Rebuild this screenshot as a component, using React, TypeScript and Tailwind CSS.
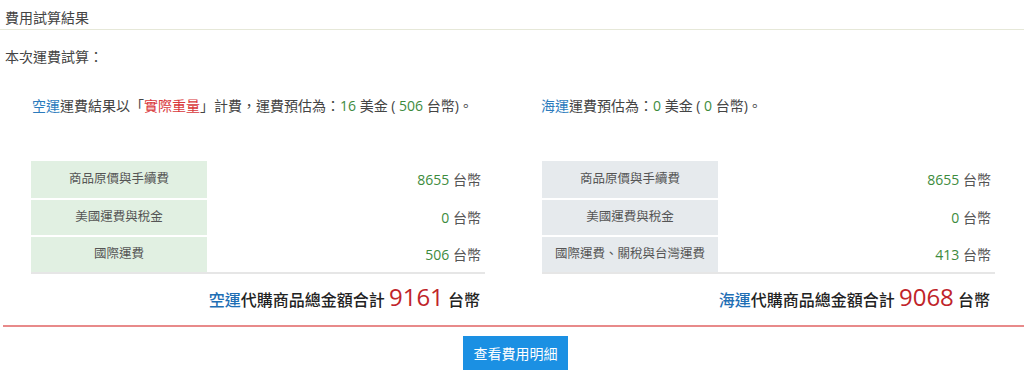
import React from "react";

const font = { fontFamily: '"Open Sans", "Noto Sans CJK TC", sans-serif' };

function Table({ rows, labelBg }: { rows: [string, string][]; labelBg: string }) {
  return (
    <div className="border-b-2 border-[#e6e6e6]">
      {rows.map(([label, value], i) => (
        <div key={i} className={`flex h-[37px] items-center ${i > 0 ? "border-t-2 border-white" : ""}`}>
          <div className={`w-[176px] h-full flex items-center justify-center text-[12.5px] text-[#555] ${labelBg}`}>{label}</div>
          <div className="flex-1 text-right pr-[4px] text-[14px] text-[#555]">
            <span className="text-[#3d8b3d]">{value}</span> 台幣
          </div>
        </div>
      ))}
    </div>
  );
}

export default function App() {
  return (
    <div className="w-[1024px] h-[377px] bg-white text-[#444] overflow-hidden" style={font}>
      <div className="h-[30px] border-b border-[#e6e8d8] pl-[5px] pt-[8px] text-[14px] leading-[20px] text-[#444]">費用試算結果</div>
      <div className="pl-[5px] pt-[17px] text-[14px] leading-[20px]">本次運費試算：</div>
      <div className="flex">
        <div className="w-[512px] pl-[31px] pr-[27px]">
          <div className="pt-[29px] pl-[1px] text-[14px] leading-[20px]">
            <span className="text-[#2b7bbd]">空運</span>運費結果以「<span className="text-[#d9373b]">實際重量</span>」計費，運費預估為：<span className="text-[#3d8b3d]">16</span> 美金 ( <span className="text-[#3d8b3d]">506</span> 台幣)。
          </div>
          <div className="mt-[45px]">
            <Table labelBg="bg-[#e1f0e2]" rows={[["商品原價與手續費", "8655"], ["美國運費與稅金", "0"], ["國際運費", "506"]]} />
          </div>
          <div className="text-right pr-[5px] pt-[8px] text-[16px] leading-[30px] font-medium text-[#222]">
            <span className="text-[#1f6fb5]">空運</span>代購商品總金額合計 <span className="text-[24px] text-[#c0242a] font-normal">9161</span> 台幣
          </div>
        </div>
        <div className="w-[512px] pl-[30px] pr-[29px]">
          <div className="pt-[29px] -ml-[1px] text-[14px] leading-[20px]">
            <span className="text-[#2b7bbd]">海運</span>運費預估為：<span className="text-[#3d8b3d]">0</span> 美金 ( <span className="text-[#3d8b3d]">0</span> 台幣)。
          </div>
          <div className="mt-[45px]">
            <Table labelBg="bg-[#e6eaed]" rows={[["商品原價與手續費", "8655"], ["美國運費與稅金", "0"], ["國際運費、關稅與台灣運費", "413"]]} />
          </div>
          <div className="text-right pr-[5px] pt-[8px] text-[16px] leading-[30px] font-medium text-[#222]">
            <span className="text-[#1f6fb5]">海運</span>代購商品總金額合計 <span className="text-[24px] text-[#c0242a] font-normal">9068</span> 台幣
          </div>
        </div>
      </div>
      <div className="ml-[3px] mt-[10px] border-t-2 border-[#e88a8a]" />
      <div className="flex justify-center pt-[9px] pb-[9px] border-b border-[#e0e0e0]">
        <button className="w-[105px] h-[34px] bg-[#1b90e3] text-white text-[14px] ml-[7px]">查看費用明細</button>
      </div>
    </div>
  );
}
